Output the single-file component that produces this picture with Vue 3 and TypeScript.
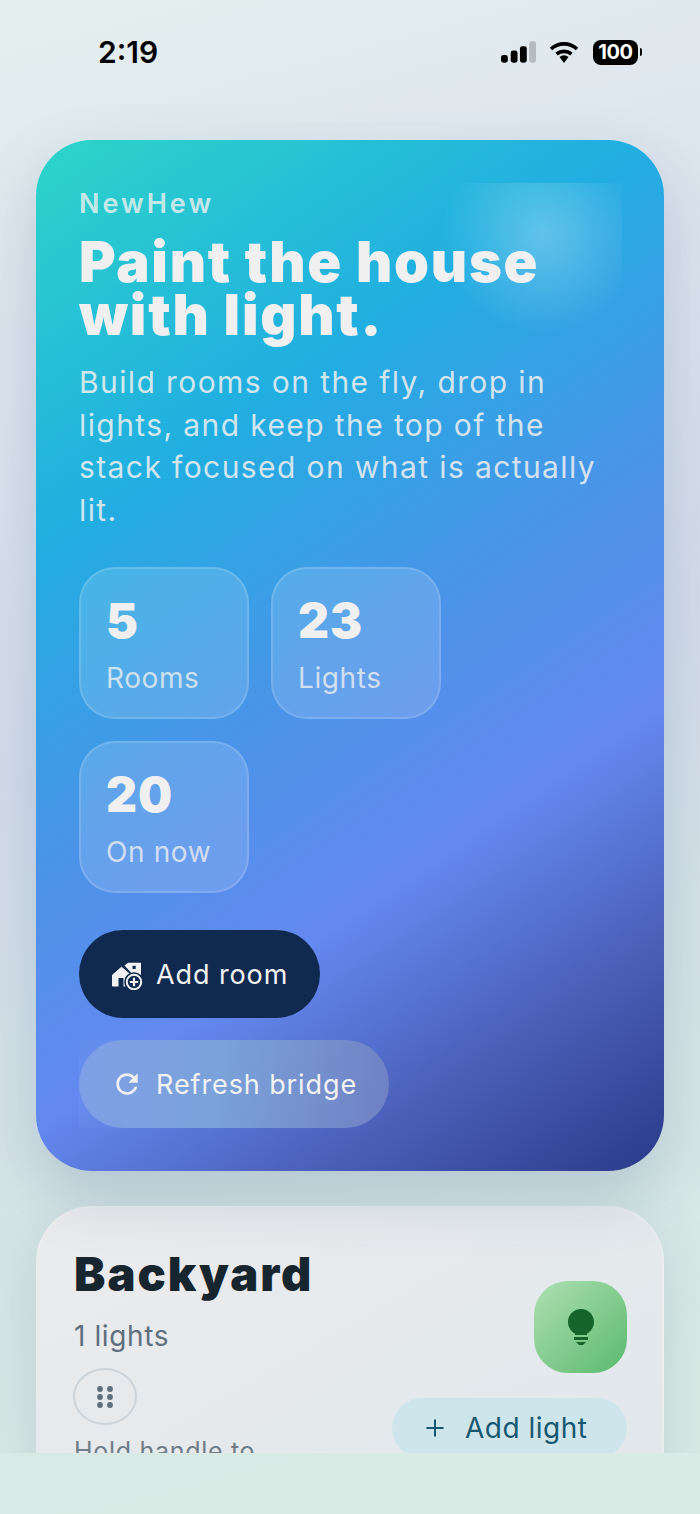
<template>
  <div class="screen">
    <div class="status">
      <span class="time">2:19</span>
      <div class="status-icons">
        <svg class="signal" width="35" height="22" viewBox="0 0 36 22">
          <rect x="0" y="14" width="7" height="8" rx="2.5" fill="#000" />
          <rect x="10" y="9.500" width="7" height="12.500" rx="2.500" fill="#000" />
          <rect x="19.500" y="5" width="7" height="17" rx="2.500" fill="#000" />
          <rect x="29" y="0" width="7" height="22" rx="2.500" fill="#b4bac0" />
        </svg>
        <svg class="wifi" width="30" height="22" viewBox="0 0 30 22">
          <path d="M2 8 A19 19 0 0 1 28 8" fill="none" stroke="#000" stroke-width="3.600" />
          <path d="M7.500 13 A12 12 0 0 1 22.500 13" fill="none" stroke="#000" stroke-width="3.600" />
          <path d="M10.500 16 A7 7 0 0 1 19.500 16 L15 22 Z" fill="#000" />
        </svg>
        <div class="battery">
          <span class="battery-body">100</span>
          <span class="battery-tip"></span>
        </div>
      </div>
    </div>

    <main class="scroller">
      <section class="hero">
        <div class="glow"></div>
        <div class="brand">NewHew</div>
        <h1>Paint the house<br />with light.</h1>
        <p class="lead">Build rooms on the fly, drop in lights, and keep the top of the stack focused on what is actually lit.</p>

        <div class="stats">
          <div v-for="stat in stats" :key="stat.label" class="stat">
            <div class="stat-value">{{ stat.value }}</div>
            <div class="stat-label">{{ stat.label }}</div>
          </div>
        </div>

        <div class="actions">
          <button class="btn btn-dark">
            <svg width="32" height="32" viewBox="-1 -4 32 32">
              <path d="M12.500 3.500 16 .8h13V14h-7Z" fill="#f2f2f2" />
              <rect x="20.500" y="3.800" width="3.200" height="3.200" fill="#10294f" />
              <path d="M.5 13 9.500 5.200 18 12.500V24H.5Z" fill="#f2f2f2" stroke="#f2f2f2" stroke-linejoin="round" />
              <rect x="6.500" y="16" width="5" height="9" fill="#10294f" />
              <circle cx="22" cy="20" r="9.800" fill="#10294f" />
              <circle cx="22" cy="20" r="7.200" fill="none" stroke="#f2f2f2" stroke-width="2" />
              <path d="M22 15.800v8.400M17.800 20h8.400" stroke="#f2f2f2" stroke-width="2.200" />
            </svg>
            <span>Add room</span>
          </button>
          <div class="ghost-wrap">
            <button class="btn btn-ghost">
              <svg width="32" height="32" viewBox="0 0 24 24">
                <path d="M17.650 6.350C16.200 4.900 14.210 4 12 4c-4.420 0-7.990 3.580-7.990 8s3.570 8 7.990 8c3.730 0 6.840-2.550 7.730-6h-2.080c-.82 2.330-3.040 4-5.650 4-3.310 0-6-2.690-6-6s2.690-6 6-6c1.660 0 3.140.69 4.220 1.780L13 11h7V4l-2.350 2.350z" fill="#f0f0f0" />
              </svg>
              <span>Refresh bridge</span>
            </button>
          </div>
        </div>
      </section>

      <section class="room">
        <div class="room-left">
          <h2>Backyard</h2>
          <div class="room-count">1 lights</div>
          <div class="handle">
            <svg width="16" height="22" viewBox="0 0 16 22">
              <circle v-for="dot in dots" :key="dot.x + '-' + dot.y" :cx="dot.x" :cy="dot.y" r="2.900" fill="#5f6f7c" />
            </svg>
          </div>
          <div class="hint">Hold handle to<br />reorder</div>
        </div>
        <div class="room-right">
          <div class="bulb">
            <svg width="26" height="36" viewBox="0 0 26 36">
              <path d="M13 0C5.800 0 0 5.800 0 13c0 5 2.800 9.400 7 11.600V26h12v-1.400c4.200-2.200 7-6.600 7-11.600C26 5.800 20.200 0 13 0Z" fill="#14642c" />
              <rect x="6" y="28" width="14" height="3" fill="#14642c" />
              <path d="M8 33h10l-3 3h-4Z" fill="#14642c" />
            </svg>
          </div>
          <button class="add-light">
            <svg width="20" height="20" viewBox="0 0 20 20">
              <path d="M10 1.500v17M1.500 10h17" stroke="#17586f" stroke-width="2" />
            </svg>
            <span>Add light</span>
          </button>
        </div>
      </section>
    </main>
  </div>
</template>

<script setup lang="ts">
const stats = [
  { value: 5, label: 'Rooms' },
  { value: 23, label: 'Lights' },
  { value: 20, label: 'On now' },
];

const dots = [3, 11, 19].flatMap((y) => [
  { x: 3, y },
  { x: 13, y },
]);
</script>

<style>
html,
body {
  margin: 0;
  background: #d9ebe5;
}
</style>

<style scoped>
.screen {
  position: relative;
  width: 700px;
  height: 1514px;
  overflow: hidden;
  font-family: Inter, "Noto Sans", sans-serif;
  background: linear-gradient(165deg, #e5efee 0%, #dde5ee 20%, #d3dcea 46%, #d6e6e6 76%, #d9ebe5 92%);
}

.status {
  display: flex;
  justify-content: space-between;
  align-items: center;
  height: 104px;
  padding: 0 58px 0 98px;
  box-sizing: border-box;
}

.time {
  font-size: 30px;
  font-weight: 600;
  color: #000;
}

.status-icons {
  display: flex;
  align-items: center;
  gap: 13px;
}

.battery {
  display: flex;
  align-items: center;
  margin-left: 1px;
}

.battery-body {
  width: 45px;
  height: 25px;
  border-radius: 8px;
  background: #000;
  color: #fff;
  font-size: 20px;
  font-weight: 700;
  line-height: 25px;
  text-align: center;
  letter-spacing: -0.4px;
}

.battery-tip {
  width: 2px;
  height: 8px;
  margin-left: 2px;
  border-radius: 0 2px 2px 0;
  background: #000;
}

.scroller {
  height: 1349px;
  padding: 36px 36px 0;
  box-sizing: border-box;
  overflow: hidden;
}

.hero {
  position: relative;
  box-sizing: border-box;
  padding: 46px 43px 43px;
  border-radius: 56px;
  color: #f0f0f0;
  background: linear-gradient(146deg, #2dd5c8 0%, #21aee1 28%, #4a94e8 50%, #6488ef 68%, #4a5fb8 84%, #2b3a88 100%);
  box-shadow: 0 24px 60px rgba(60, 90, 130, 0.22);
}

.glow {
  position: absolute;
  top: 43px;
  right: 42px;
  width: 200px;
  height: 200px;
  background: radial-gradient(circle 100px at 60% 25%, rgba(255, 255, 255, 0.28) 0%, rgba(255, 255, 255, 0.14) 50%, rgba(255, 255, 255, 0) 100%);
}

.brand {
  position: relative;
  font-size: 27px;
  line-height: 36px;
  font-weight: 600;
  letter-spacing: 3px;
  color: rgba(240, 240, 240, 0.8);
}

h1 {
  position: relative;
  margin: 14px 0 0;
  font-size: 56px;
  line-height: 53px;
  font-weight: 900;
  letter-spacing: 1.75px;
}

.lead {
  position: relative;
  margin: 19px 0 0;
  font-size: 30px;
  line-height: 42.500px;
  letter-spacing: 1.400px;
  color: rgba(240, 240, 240, 0.86);
}

.stats {
  display: flex;
  flex-wrap: wrap;
  gap: 22px;
  width: 400px;
  margin-top: 36px;
}

.stat {
  box-sizing: border-box;
  width: 170px;
  height: 152px;
  padding: 26px 25px;
  border: 2px solid rgba(255, 255, 255, 0.14);
  border-radius: 36px;
  background: rgba(255, 255, 255, 0.14);
}

.stat-value {
  font-size: 48px;
  line-height: 52px;
  font-weight: 900;
  letter-spacing: 1px;
}

.stat-label {
  margin-top: 14px;
  font-size: 28px;
  line-height: 34px;
  letter-spacing: 0.6px;
  color: rgba(240, 240, 240, 0.78);
}

.actions {
  display: flex;
  flex-direction: column;
  align-items: flex-start;
  gap: 22px;
  margin-top: 37px;
}

.btn {
  display: flex;
  align-items: center;
  gap: 13px;
  height: 88px;
  padding: 0 0 0 32px;
  border: none;
  border-radius: 44px;
  font-family: inherit;
  font-size: 27px;
  letter-spacing: 0.9px;
  color: #f2f2f2;
}

.btn-dark {
  width: 241px;
  background: #10294f;
}

.btn-ghost {
  width: 310px;
  background: linear-gradient(100deg, #7f9fe6 0%, #7ba2da 45%, #6f80c2 100%);
}

.ghost-wrap {
  background: linear-gradient(90deg, rgba(255, 255, 255, 0.03), rgba(255, 255, 255, 0) 60%);
}

.room {
  display: flex;
  align-items: center;
  justify-content: space-between;
  box-sizing: border-box;
  margin-top: 35px;
  padding: 38px 35px 38px 36px;
  border: 2px solid rgba(255, 255, 255, 0.15);
  border-radius: 56px;
  background: linear-gradient(150deg, #ebebed 0%, #e4e9ec 60%, #e2e7ee 100%);
  box-shadow: 0 20px 60px rgba(60, 100, 120, 0.18);
}

h2 {
  margin: 0;
  font-size: 47px;
  line-height: 56px;
  font-weight: 900;
  letter-spacing: 2px;
  color: #17252e;
}

.room-count {
  margin-top: 17px;
  font-size: 28px;
  line-height: 34px;
  letter-spacing: 0.6px;
  color: #5f6f7c;
}

.handle {
  display: flex;
  align-items: center;
  justify-content: center;
  width: 64px;
  height: 57px;
  margin: 15px 0 0 -1px;
  border: 2px solid #ccd4dc;
  border-radius: 50%;
  box-sizing: border-box;
}

.hint {
  margin-top: 10px;
  font-size: 25px;
  line-height: 32px;
  letter-spacing: 0.7px;
  color: #6f7d88;
}

.room-right {
  display: flex;
  flex-direction: column;
  align-items: flex-end;
  gap: 25px;
  padding-bottom: 6px;
}

.bulb {
  display: flex;
  align-items: center;
  justify-content: center;
  width: 93px;
  height: 92px;
  border-radius: 34px;
  background: linear-gradient(135deg, #aee0b2 0%, #5bb96e 100%);
}

.add-light {
  display: flex;
  align-items: center;
  gap: 20px;
  width: 235px;
  height: 60px;
  padding: 0 0 0 33px;
  border: none;
  border-radius: 30px;
  background: #cfe5ec;
  font-family: inherit;
  font-size: 28px;
  letter-spacing: 0.5px;
  color: #17586f;
}
</style>
